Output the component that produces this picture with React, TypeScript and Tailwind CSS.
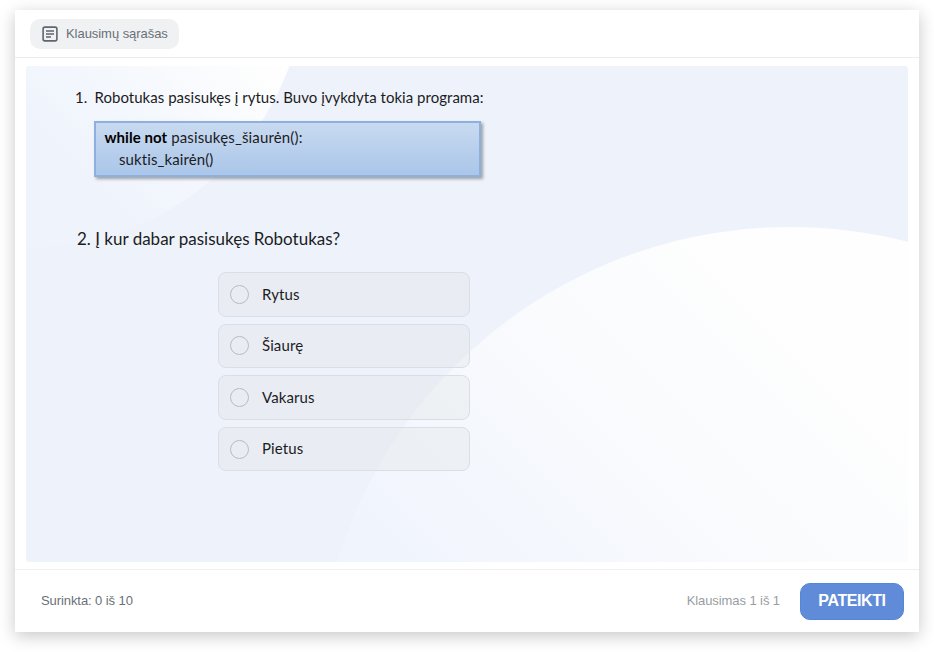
const options = ['Rytus', 'Šiaurę', 'Vakarus', 'Pietus'];

function ListIcon() {
  return (
    <svg className="block size-4" viewBox="0 0 16 16" fill="none" stroke="#5f6670">
      <rect x="1.1" y="1.1" width="13.8" height="13.8" rx="1.8" strokeWidth="1.6" />
      <path d="M4 4.9h8M4 7.9h8M4 10.9h5" strokeWidth="1.5" />
    </svg>
  );
}

function Backdrop() {
  return (
    <svg className="absolute inset-0 h-full w-full" viewBox="26 65.5 882 496.5" preserveAspectRatio="none">
      <defs>
        <linearGradient id="small" gradientUnits="userSpaceOnUse" x1="80" y1="190" x2="235" y2="35">
          <stop offset="0" stopColor="#eef3fc" />
          <stop offset="0.5" stopColor="#f5f8fd" />
          <stop offset="1" stopColor="#fefefe" />
        </linearGradient>
        <linearGradient id="large" gradientUnits="userSpaceOnUse" x1="400" y1="570" x2="730" y2="240">
          <stop offset="0" stopColor="#f0f4fd" />
          <stop offset="0.5" stopColor="#f8fafd" />
          <stop offset="1" stopColor="#fefefe" />
        </linearGradient>
      </defs>
      <circle cx="30" cy="-29" r="276" fill="url(#small)" />
      <circle cx="790" cy="700" r="473.5" fill="url(#large)" />
    </svg>
  );
}

export default function App() {
  return (
    <div className="h-[652px] w-[934px] overflow-hidden bg-white pt-[10px] pl-[15px] font-['Liberation_Sans',Arial,sans-serif]">
      <div className="flex h-[622px] w-[904px] flex-col bg-white shadow-[0_4px_16px_rgba(0,0,0,0.22)]">
        <header className="flex h-12 shrink-0 items-center border-b border-[#ececee] pl-[15px]">
          <button className="flex h-[30px] w-[149px] items-center gap-[9px] rounded-[10px] bg-[#f0f1f3] pl-3 text-[13px] whitespace-nowrap text-[#6a7078]">
            <ListIcon />
            <span className="-ml-px tracking-[-0.05px]">Klausimų sąrašas</span>
          </button>
        </header>

        <main className="relative mx-[11px] mt-[7.5px] h-[496.5px] shrink-0 overflow-hidden rounded-[3px] bg-[#eef3fb] font-['Lato','Noto_Sans',sans-serif] text-[#1c1c1e] [font-variant-ligatures:none]">
          <Backdrop />
          <div className="relative flex flex-col pt-[20px]">
            <div className="flex h-6 items-center pl-[49px] text-[15px] whitespace-nowrap">
              <span className="w-[19.5px]">1.</span>
              <span className="tracking-[0.03px]">Robotukas pasisukęs į rytus. Buvo įvykdyta tokia programa:</span>
            </div>
            <div className="mt-[11.5px] ml-[68px] h-[56px] w-[387px] border-2 border-[#8eb0df] bg-linear-to-b from-[#c8daf0] to-[#aac6e9] pt-[3px] pl-[8.5px] text-[15px] leading-[22px] whitespace-nowrap shadow-[2px_2px_3px_rgba(0,0,0,0.35)]">
              <div className="tracking-[0.15px]">
                <b className="tracking-[0.05px] text-black">while not</b> pasisukęs_šiaurėn():
              </div>
              <div className="pl-[14.5px] tracking-[0.1px]">suktis_kairėn()</div>
            </div>
            <div className="mt-[50px] flex h-6 items-center pl-[51px] text-[17px] whitespace-nowrap">
              2. Į kur dabar pasisukęs Robotukas?
            </div>
            <div className="mt-[21px] ml-[192px] flex w-[252px] flex-col gap-[7px]">
              {options.map((option) => (
                <div
                  key={option}
                  className="flex h-[44.6px] items-center gap-[13px] rounded-[8px] border border-[#dadfe7] bg-[#dde0e0]/30 pl-[11px] text-[15px]"
                >
                  <span className="size-[19px] rounded-full border-[1.5px] border-[#b9bbbe]" />
                  <span className="-mt-px tracking-[0.1px]">{option}</span>
                </div>
              ))}
            </div>
          </div>
        </main>

        <footer className="mt-[7px] flex flex-1 items-center border-t border-[#f0f0f2] pr-[15px] pl-[26px] text-[13px]">
          <span className="tracking-[-0.08px] text-[#6a7078]">Surinkta: 0 iš 10</span>
          <span className="ml-auto tracking-[-0.08px] text-[#999da3]">Klausimas 1 iš 1</span>
          <button className="ml-5 h-[37px] w-[104px] rounded-[10px] border border-[#5585d8] bg-[#5f8bd8] text-[16px] font-bold tracking-[-0.4px] text-white">
            PATEIKTI
          </button>
        </footer>
      </div>
    </div>
  );
}
